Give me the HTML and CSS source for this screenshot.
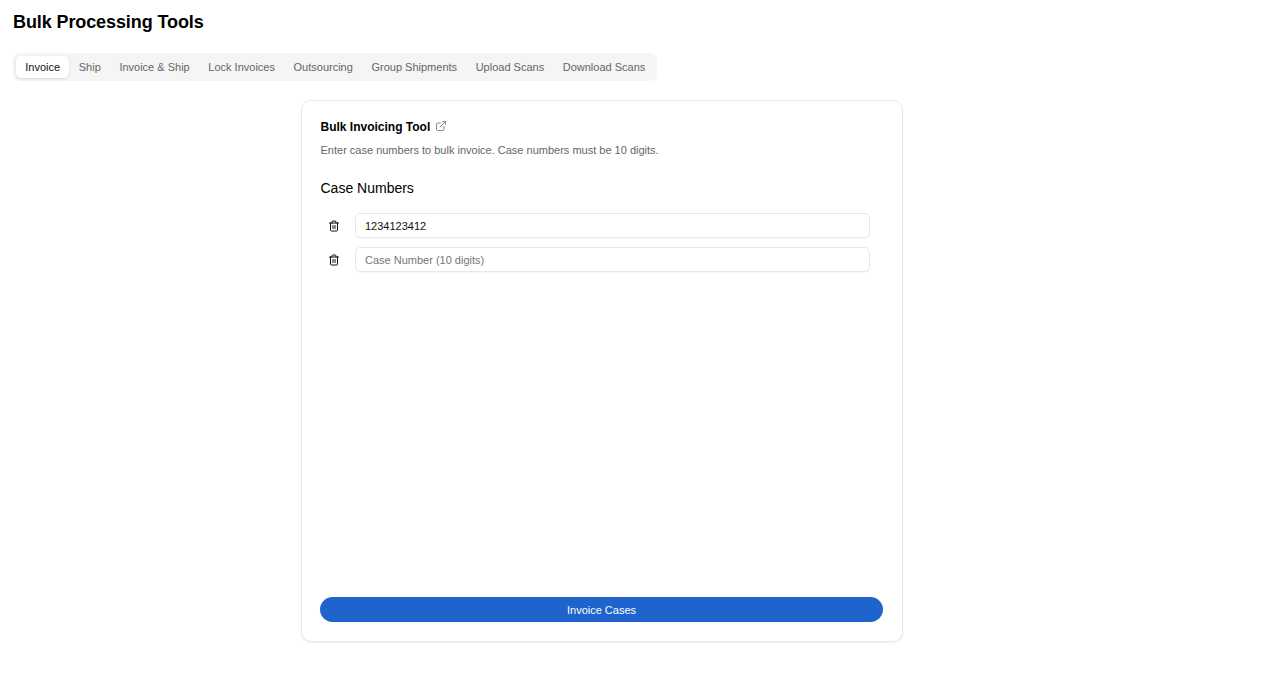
FILE: index.html
```html
<!DOCTYPE html>
<html lang="en">
<head>
<meta charset="utf-8">
<title>Bulk Processing Tools</title>
<link rel="stylesheet" href="styles.css">
</head>
<body>
<h1 class="page-title">Bulk Processing Tools</h1>
<nav class="tabs">
  <span class="tab tab-active">Invoice</span>
  <span class="tab">Ship</span>
  <span class="tab">Invoice &amp; Ship</span>
  <span class="tab">Lock Invoices</span>
  <span class="tab">Outsourcing</span>
  <span class="tab">Group Shipments</span>
  <span class="tab">Upload Scans</span>
  <span class="tab">Download Scans</span>
</nav>
<main class="card">
  <div class="card-head">
    <h2 class="card-title">Bulk Invoicing Tool</h2>
    <svg class="ext-icon" viewBox="0 0 24 24" fill="none" stroke="currentColor" stroke-width="2" stroke-linecap="round" stroke-linejoin="round"><path d="M18 13v6a2 2 0 0 1-2 2H5a2 2 0 0 1-2-2V8a2 2 0 0 1 2-2h6"/><path d="M15 3h6v6"/><path d="M10 14 21 3"/></svg>
  </div>
  <p class="card-desc">Enter case numbers to bulk invoice. Case numbers must be 10 digits.</p>
  <h3 class="section-title">Case Numbers</h3>
  <div class="rows">
    <div class="row">
      <svg class="trash" viewBox="0 0 24 24" fill="none" stroke="currentColor" stroke-width="2" stroke-linecap="round" stroke-linejoin="round"><path d="M3 6h18"/><path d="M8 6V4a2 2 0 0 1 2-2h4a2 2 0 0 1 2 2v2"/><path d="M5 6v14a2 2 0 0 0 2 2h10a2 2 0 0 0 2-2V6"/><path d="M10 11v6"/><path d="M14 11v6"/></svg>
      <input class="case-input" type="text" value="1234123412" placeholder="Case Number (10 digits)">
    </div>
    <div class="row">
      <svg class="trash" viewBox="0 0 24 24" fill="none" stroke="currentColor" stroke-width="2" stroke-linecap="round" stroke-linejoin="round"><path d="M3 6h18"/><path d="M8 6V4a2 2 0 0 1 2-2h4a2 2 0 0 1 2 2v2"/><path d="M5 6v14a2 2 0 0 0 2 2h10a2 2 0 0 0 2-2V6"/><path d="M10 11v6"/><path d="M14 11v6"/></svg>
      <input class="case-input" type="text" placeholder="Case Number (10 digits)">
    </div>
  </div>
  <button class="submit" type="button">Invoice Cases</button>
</main>
</body>
</html>
```
FILE: styles.css
```css
* { box-sizing: border-box; }
html, body { height: 100%; }
body {
  margin: 0;
  padding: 10px 13px 0;
  background: #fff;
  color: #000;
  font-family: "Liberation Sans", Arial, sans-serif;
  overflow: hidden;
}
.page-title {
  margin: 0;
  font-size: 18px;
  line-height: 24px;
  font-weight: 700;
  letter-spacing: -0.1px;
}
.tabs {
  display: flex;
  width: 644px;
  height: 28px;
  margin-top: 19px;
  padding: 3px;
  background: #f5f5f5;
  border-radius: 7px;
}
.tab {
  display: flex;
  align-items: center;
  padding: 0 9.3px;
  font-size: 11px;
  white-space: nowrap;
  color: #666;
  border-radius: 5px;
}
.tab-active {
  background: #fff;
  color: #111;
  box-shadow: 0 1px 3px rgba(0,0,0,.12);
}
.card {
  display: flex;
  flex-direction: column;
  width: 602px;
  height: 542px;
  margin: 19px 0 0 288px;
  padding: 19px 19px 19px 18.5px;
  background: #fff;
  border: 1px solid #e8e8e8;
  border-radius: 10px;
  box-shadow: 0 1px 2px rgba(0,0,0,.06);
}
.card-head {
  display: flex;
  align-items: center;
  gap: 5px;
  height: 14px;
}
.card-title {
  margin: 0;
  font-size: 12px;
  line-height: 14px;
  font-weight: 700;
}
.ext-icon {
  width: 12px;
  height: 12px;
  color: #8a8a8a;
  margin-top: -2px;
}
.card-desc {
  margin: 9px 0 0;
  font-size: 11px;
  line-height: 14px;
  color: #666;
}
.section-title {
  margin: 22px 0 0;
  font-size: 14px;
  line-height: 18px;
  font-weight: 400;
}
.rows {
  display: flex;
  flex-direction: column;
  gap: 9px;
  margin-top: 16px;
  padding-left: 7.5px;
}
.row {
  display: flex;
  align-items: center;
  gap: 15px;
  width: 542px;
}
.trash {
  width: 12px;
  height: 14px;
  flex: none;
  color: #111;
}
.case-input {
  flex: 1;
  min-width: 0;
  height: 25px;
  padding: 0 9px;
  font-family: inherit;
  font-size: 11px;
  color: #111;
  background: #fff;
  border: 1px solid #e8e8e8;
  border-radius: 5px;
  box-shadow: 0 1px 1px rgba(0,0,0,.03);
  outline: none;
}
.case-input::placeholder { color: #777; opacity: 1; }
.submit {
  margin: auto 0 0 -0.5px;
  height: 25px;
  border: 0;
  border-radius: 13px;
  background: #1f64cc;
  color: #fff;
  font-family: inherit;
  font-size: 11px;
  font-weight: 400;
}
```
